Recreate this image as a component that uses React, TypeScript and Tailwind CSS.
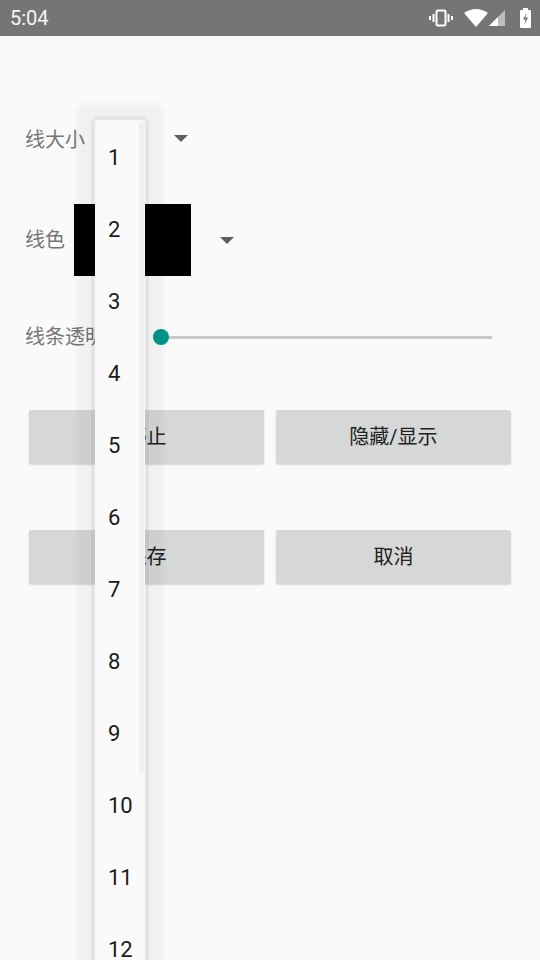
import React from 'react'

const cjk = { fontFamily: 'Roboto, "Noto Sans CJK SC", sans-serif' }

function Arrow() {
  return (
    <svg width="14" height="7" viewBox="0 0 14 7" className="block">
      <path d="M0 0 L14 0 L7 7 Z" fill="#5e5e5e" />
    </svg>
  )
}

function StatusBar() {
  return (
    <div className="h-[36px] bg-[#757575] flex items-center justify-between pl-[10px] pr-[9px]">
      <span className="text-[20px] text-[#f5f5f5]" style={{ fontFamily: 'Roboto, sans-serif' }}>5:04</span>
      <div className="flex items-center gap-[7px]">
        {/* vibrate */}
        <svg width="24" height="18" viewBox="0 0 24 18">
          <rect x="7.5" y="1.5" width="9" height="15" rx="1.2" fill="none" stroke="#fff" strokeWidth="2" />
          <rect x="3.5" y="5" width="2" height="8" fill="#fff" />
          <rect x="18.5" y="5" width="2" height="8" fill="#fff" />
          <rect x="0" y="7" width="2" height="4" fill="#fff" />
          <rect x="22" y="7" width="2" height="4" fill="#fff" />
        </svg>
        {/* wifi */}
        <svg width="24" height="18" viewBox="0 0 24 18" className="ml-[4px]">
          <path d="M0 4 Q12 -4 24 4 L12 18 Z" fill="#fff" />
        </svg>
        {/* signal */}
        <svg width="16" height="16" viewBox="0 0 16 16" className="-ml-[6px]">
          <path d="M16 0 L16 16 L0 16 Z" fill="#bdbdbd" />
          <path d="M9 7 L9 16 L0 16 Z" fill="#fff" />
        </svg>
        {/* battery */}
        <svg width="11" height="20" viewBox="0 0 11 20" className="ml-[8px]">
          <rect x="3" y="0" width="5" height="2" fill="#fff" />
          <rect x="0" y="2" width="11" height="18" rx="1" fill="#fff" />
          <path d="M6.5 5 L3 11.5 L5.5 11.5 L4.5 17 L8 9.5 L5.5 9.5 Z" fill="#757575" />
        </svg>
      </div>
    </div>
  )
}

export default function App() {
  const items = Array.from({ length: 12 }, (_, i) => i + 1)

  return (
    <div className="relative w-[540px] h-[960px] overflow-hidden bg-[#fafafa]" style={cjk}>
      <StatusBar />

      <div className="pl-[25px]">
        <div className="mt-[74px] h-[60px] flex items-center">
          <span className="text-[20px] text-[#757575] leading-none">线大小</span>
          <div className="ml-[89px] -mt-[4px]"><Arrow /></div>
        </div>

        <div className="mt-[34px] h-[72px] flex items-center">
          <span className="text-[20px] text-[#757575] leading-none w-[40px]">线色</span>
          <div className="ml-[9px] w-[117px] h-[72px] bg-black" />
          <div className="ml-[29px]"><Arrow /></div>
        </div>

        <div className="mt-[41px] h-[40px] flex items-center">
          <span className="text-[20px] text-[#757575] leading-none w-[100px] whitespace-nowrap">线条透明度</span>
          <div className="relative ml-[28px] w-[339px] h-[16px] flex items-center">
            <div className="ml-[8px] flex-1 h-[3px] bg-[#c8c8c8]" />
            <div className="absolute left-0 top-0 w-[16px] h-[16px] rounded-full bg-[#009688]" />
          </div>
        </div>
      </div>

      <div className="px-[29px]">
        <div className="mt-[53px] grid grid-cols-2 gap-[12px]">
          <button className="h-[54px] rounded-[2px] bg-[#d6d7d7] shadow-[0_1px_2px_rgba(0,0,0,0.15)] text-[20px] text-[#212121]">停止</button>
          <button className="h-[54px] rounded-[2px] bg-[#d6d7d7] shadow-[0_1px_2px_rgba(0,0,0,0.15)] text-[20px] text-[#212121]">隐藏/显示</button>
        </div>
        <div className="mt-[66px] grid grid-cols-2 gap-[12px]">
          <button className="h-[54px] rounded-[2px] bg-[#d6d7d7] shadow-[0_1px_2px_rgba(0,0,0,0.15)] text-[20px] text-[#212121]">保存</button>
          <button className="h-[54px] rounded-[2px] bg-[#d6d7d7] shadow-[0_1px_2px_rgba(0,0,0,0.15)] text-[20px] text-[#212121]">取消</button>
        </div>
      </div>

      {/* dropdown popup */}
      <div className="absolute left-[95px] top-[120px] w-[50px] h-[860px] rounded-[3px] bg-[#fafafa] shadow-[0_0_0_4px_rgba(0,0,0,0.05),0_2px_4px_19px_rgba(0,0,0,0.035)]">
        <div className="absolute right-[1px] top-[2px] w-[5px] h-[651px] bg-[#f0f0f0]" />
        <div className="relative pt-px">
          {items.map(n => (
            <div key={n} className="h-[72px] flex items-center pl-[13px] text-[22px] text-[#1a1a1a]" style={{ fontFamily: 'Roboto, sans-serif' }}>
              {n}
            </div>
          ))}
        </div>
      </div>
    </div>
  )
}
